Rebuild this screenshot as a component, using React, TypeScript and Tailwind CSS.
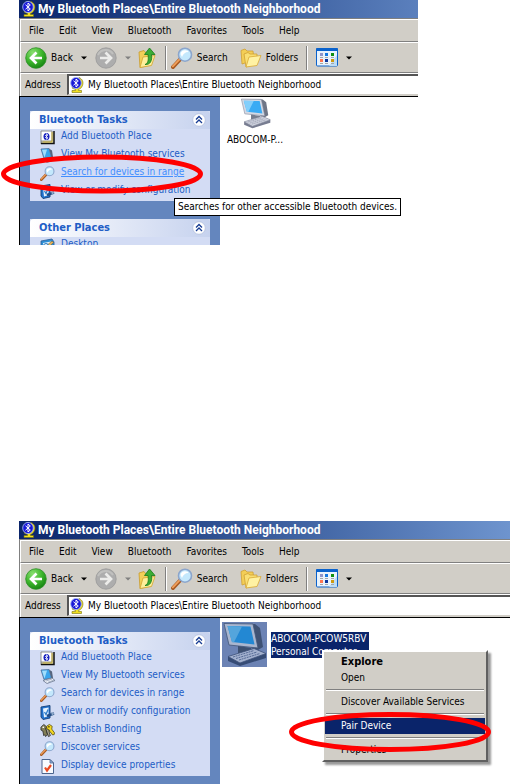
import React from 'react';
import clsx from 'clsx';

const menus = ['File', 'Edit', 'View', 'Bluetooth', 'Favorites', 'Tools', 'Help'];
const location = 'My Bluetooth Places\\Entire Bluetooth Neighborhood';

const BluetoothIcon: React.FC = () => (
  <svg width="14" height="16" viewBox="0 0 14 16" className="shrink-0">
    <path d="M9 0.500C12.500 2 13.700 5 12.500 8.500C11.500 11 10 12 8.500 12.500V13.500H11.500V15.500H2V13.500H5.500V12.500L2 11Z" fill="#f0e020" stroke="#77700a" strokeWidth="0.600" />
    <ellipse cx="6" cy="6" rx="5.300" ry="5.600" fill="#1818d8" stroke="#a3b2f2" strokeWidth="0.900" />
    <path d="M3.500 3.800L8.300 8L6 10V2L8.300 4L3.500 8.200" fill="none" stroke="#fff" strokeWidth="1" />
  </svg>
);

const BackIcon: React.FC = () => (
  <svg width="22" height="22" viewBox="0 0 22 22">
    <defs>
      <radialGradient id="backFill" cx="0.35" cy="0.25" r="0.8">
        <stop offset="0" stopColor="#8be070" />
        <stop offset="0.55" stopColor="#3db52c" />
        <stop offset="1" stopColor="#158311" />
      </radialGradient>
    </defs>
    <circle cx="11" cy="11" r="10.3" fill="url(#backFill)" stroke="#2c8f26" strokeWidth="0.8" />
    <path d="M17 11H6.500M11.500 5.500L6 11L11.500 16.500" fill="none" stroke="#fff" strokeWidth="2.700" />
  </svg>
);

const ForwardIcon: React.FC = () => (
  <svg width="22" height="22" viewBox="0 0 22 22">
    <circle cx="11" cy="11" r="10.2" fill="#adadad" stroke="#999" strokeWidth="0.8" />
    <path d="M3 8A8.500 8.500 0 0 1 18 7" fill="none" stroke="#c0c0be" strokeWidth="2" />
    <path d="M5 11H15.500M10.500 5.500L16 11L10.500 16.500" fill="none" stroke="#ececea" strokeWidth="2.700" />
  </svg>
);

const UpFolderIcon: React.FC = () => (
  <svg width="20" height="22" viewBox="0 0 20 22">
    <path d="M2 5L7 3.500L8.500 5.500H14V18L3 20.500Z" fill="#f2cf58" stroke="#c99a2c" strokeWidth="0.8" />
    <path d="M3 20.500L6 10L18 8.500L14.500 18.500Z" fill="#fdee9a" stroke="#d2a431" strokeWidth="0.8" />
    <path d="M8 17.500C11 16.500 11.800 13 11 7.500H7.500L12.500 1L18 7.500H14.500C15.500 14 13 18 8 17.500Z" fill="#3bad35" stroke="#187a19" strokeWidth="0.8" />
  </svg>
);

const Magnifier: React.FC<{ size: number }> = ({ size }) => (
  <svg width={size} height={size} viewBox="0 0 22 22" className="shrink-0">
    <path d="M2 20L9 12.500" stroke="#a85a22" strokeWidth="4" strokeLinecap="round" />
    <path d="M1.800 19.300L8.500 12.300" stroke="#f0a05c" strokeWidth="1.800" strokeLinecap="round" />
    <circle cx="14" cy="7.700" r="6.500" fill="#c4e8fc" stroke="#8ba5cc" strokeWidth="1.600" />
    <path d="M9.500 7A4.500 4.500 0 0 1 14 3.200C16 3.200 17 4 17.500 5C14 5 12 7 11 10Z" fill="#fff" />
  </svg>
);

const FoldersIcon: React.FC = () => (
  <svg width="22" height="20" viewBox="0 0 22 20">
    <path d="M1 2.500L5 1L7 3H13L14 12L2 16Z" fill="#f3ce56" stroke="#cf9f34" strokeWidth="0.8" />
    <path d="M4 6L8 4.500L10 6H17V15L6 19Z" fill="#f9df74" stroke="#cf9f34" strokeWidth="0.8" />
    <path d="M6 19L9 9L21 7.500L17 17.500Z" fill="#fff2a3" stroke="#d9aa35" strokeWidth="0.8" />
  </svg>
);

const ViewsIcon: React.FC = () => (
  <svg width="22" height="19" viewBox="0 0 22 19">
    <rect x="0.500" y="0.500" width="21" height="17.500" rx="1" fill="#e9f3fc" stroke="#0a62cc" />
    <rect width="22" height="3" rx="1" fill="#0a62cc" />
    <path d="M13 18L21 7V18Z" fill="#bcdcf6" />
    <rect x="4" y="5" width="3" height="3" fill="#9095c8" />
    <rect x="9" y="5" width="3" height="3" fill="#1478e0" />
    <rect x="15" y="5" width="3" height="3" fill="#109010" />
    <rect x="4" y="11" width="3" height="3" fill="#ff7650" />
    <rect x="9" y="11" width="3" height="3" fill="#0c359c" />
    <rect x="15" y="11" width="3" height="3" fill="#cf9a10" />
    <path d="M4 9.500H7M9 9.500H12M15 9.500H18M4 15.500H7M9 15.500H12M15 15.500H18" stroke="#a2a6a8" />
  </svg>
);

const Caret: React.FC<{ color: string }> = ({ color }) => (
  <svg width="6" height="4" viewBox="0 0 6 4">
    <path d="M0 0.500H6L3 3.500Z" fill={color} />
  </svg>
);

const ComputerIcon: React.FC<{ size: number; selected?: boolean }> = ({ size, selected }) => (
  <svg width={size} height={size} viewBox="0 0 45 45" className={clsx('shrink-0', selected && 'bg-[#6c83b4]')}>
    <path d="M4 2L33 2L38 6L41 25L36 28L31 27Z" fill={selected ? '#3f5274' : '#6f7686'} />
    <path d="M2 1.500L31 2L36 26L7 23Z" fill={selected ? '#a9b6cf' : '#d5d9e4'} stroke={selected ? '#435779' : '#7b8498'} strokeWidth="0.800" />
    <path d="M5.500 4L28.500 4.500L32.500 22.500L10 20Z" fill={selected ? '#2388d3' : '#3aabf4'} />
    <path d="M5.500 4L20 4.500L12 20.200H10Z" fill={selected ? '#54a5dc' : '#83cffb'} />
    <path d="M16 24L29 26L31 31L16 31Z" fill={selected ? '#3d5070' : '#777e8e'} />
    <path d="M6 35L33 27L44 32V36L18 44L6 39Z" fill={selected ? '#364c75' : '#777c90'} />
    <path d="M6 34.500L32 26.500L44 31.500L18 41Z" fill={selected ? '#a3b1ce' : '#d0d3df'} stroke={selected ? '#3c5178' : '#84899b'} strokeWidth="0.800" />
    <path d="M11 35L32 28.500M14 36.500L35 30M17 38L38 31.500" stroke={selected ? '#4c628f' : '#878d9f'} strokeWidth="0.900" strokeDasharray="2 0.700" />
  </svg>
);

const PlaceIcon: React.FC = () => (
  <svg width="15" height="15" viewBox="0 0 15 15">
    <path d="M1 1H12L14 3V13L12 14H1Z" fill="#d8d4b0" />
    <path d="M1 14V1H12V11H1" fill="#fff" stroke="#777" strokeWidth="0.8" />
    <path d="M1 13.500H14V1" fill="none" stroke="#111" strokeWidth="1.500" />
    <path d="M3 12H12V2" fill="none" stroke="#c8b13c" />
    <ellipse cx="6.500" cy="6.500" rx="3" ry="3.500" fill="#1821bf" />
    <path d="M5 5L8 8L6.500 9.300V3.700L8 5L5 8" fill="none" stroke="#fff" strokeWidth="0.700" />
  </svg>
);

const ServicesIcon: React.FC = () => (
  <svg width="15" height="15" viewBox="0 0 15 15">
    <path d="M1 1L9 0.500L11.500 9L4 10.500Z" fill="#3aa5ec" stroke="#53719a" strokeWidth="0.8" />
    <path d="M2 1.800L7 1.500L4.500 9.500Z" fill="#a1defc" />
    <path d="M9 0.500L12 2.500L13 9L11.500 9.500Z" fill="#56667f" />
    <path d="M3 11.500L12 9L15 11.500L7 14.500Z" fill="#edf1f8" stroke="#66748b" strokeWidth="0.8" />
    <path d="M6 12L12 10M8 13.300L14 11" stroke="#8f9cb3" strokeWidth="0.7" />
  </svg>
);

const ConfigIcon: React.FC = () => (
  <svg width="15" height="15" viewBox="0 0 15 15">
    <path d="M1 2L10 0.500V13L3 14.500L1 12Z" fill="#2273ce" stroke="#123e79" strokeWidth="0.9" />
    <path d="M3 3.500L8.500 2.500V11L4 12.500Z" fill="#e8f4ff" />
    <path d="M4.500 7L6 9.500L8 4.500" fill="none" stroke="#2e7dca" strokeWidth="1.300" />
    <path d="M7 11L14 8.500" stroke="#234c83" strokeWidth="2.400" />
    <path d="M11 7L14.500 8.500L12 11Z" fill="#8ca8c8" />
  </svg>
);

const KeysIcon: React.FC = () => (
  <svg width="16" height="15" viewBox="0 0 16 15">
    <g fill="#827f58" stroke="#222" strokeWidth="0.8">
      <path d="M1 4L4 1L7 3.500L6.500 6L8 12L6 14L5 12L4 13L3 8L1 7Z" />
      <path d="M6 5L9 4L10 10L11 13L9 14Z" fill="#aaa68b" />
    </g>
    <path d="M7 3L10 1L13 3L12.500 6L15.500 10L15 12H13L12 10L10.500 9L10 7L7.500 6Z" fill="#f3d722" stroke="#50480c" strokeWidth="0.8" />
    <circle cx="9.500" cy="3.500" r="0.900" fill="#443e10" />
    <circle cx="3.500" cy="4" r="0.900" fill="#fff" />
  </svg>
);

const PropertiesIcon: React.FC = () => (
  <svg width="15" height="15" viewBox="0 0 15 15">
    <path d="M2 0.500H10L13.500 4V14.500H2Z" fill="#f8fbff" stroke="#4c658e" />
    <path d="M10 0.500V4H13.500Z" fill="#93b5df" stroke="#4c658e" strokeWidth="0.8" />
    <path d="M5 8.500L7 11.500L11 6" fill="none" stroke="#ea4a22" strokeWidth="2.200" />
  </svg>
);

const DesktopIcon: React.FC = () => (
  <svg width="15" height="15" viewBox="0 0 15 15">
    <path d="M1 3L12 1L14 4V13L3 14.500L1 12Z" fill="#2d8fd6" stroke="#2b5c96" strokeWidth="0.8" />
    <path d="M3 5L11 3.500V11L4 12Z" fill="#e5f3fb" />
    <path d="M5 9L12 3L13.500 4.500L7 10.500Z" fill="#e6b35b" stroke="#7d6434" strokeWidth="0.600" />
    <circle cx="6" cy="8" r="2.500" fill="none" stroke="#2c79c0" />
  </svg>
);

interface Task {
  label: string;
  icon: React.ReactNode;
  active?: boolean;
}

const addPlace: Task = { label: 'Add Bluetooth Place', icon: <PlaceIcon /> };
const viewServices: Task = { label: 'View My Bluetooth services', icon: <ServicesIcon /> };
const searchDevices: Task = { label: 'Search for devices in range', icon: <Magnifier size={15} /> };
const configure: Task = { label: 'View or modify configuration', icon: <ConfigIcon /> };

const baseTasks: Task[] = [addPlace, viewServices, { ...searchDevices, active: true }, configure];

const deviceTasks: Task[] = [
  addPlace,
  viewServices,
  searchDevices,
  configure,
  { label: 'Establish Bonding', icon: <KeysIcon /> },
  { label: 'Discover services', icon: <Magnifier size={15} /> },
  { label: 'Display device properties', icon: <PropertiesIcon /> },
];

const TaskBox: React.FC<{ title: string; tasks: Task[] }> = ({ title, tasks }) => (
  <section className="bg-[#d3dcf4]">
    <header className="flex h-[18px] items-center justify-between rounded-t-sm bg-linear-to-r from-white to-[#c6d2ee] pr-1 pl-[9px]">
      <h2 className="text-[11px] leading-4 font-bold text-[#215dc6]">{title}</h2>
      <button type="button" aria-label={'Collapse ' + title}>
        <svg width="14" height="14" viewBox="0 0 14 14">
          <circle cx="7" cy="7" r="6.300" fill="#fff" stroke="#b3bfdd" strokeWidth="0.8" />
          <path d="M4 6.500L7 3.500L10 6.500M4 10L7 7L10 10" fill="none" stroke="#173c93" strokeWidth="1.300" />
        </svg>
      </button>
    </header>
    <ul>
      {tasks.map((task) => (
        <li key={task.label} className="h-[18px] pl-[10px]">
          <a
            href="#"
            className={clsx('flex items-start gap-[6px] leading-[14px]', task.active ? 'text-[#428eff] underline' : 'text-[#215dc6]')}
          >
            <span className="flex w-[15px] shrink-0 justify-center pt-px">{task.icon}</span>
            <span className="whitespace-nowrap">{task.label}</span>
          </a>
        </li>
      ))}
    </ul>
  </section>
);

interface ExplorerProps {
  id: string;
  titleClass: string;
  className?: string;
  bodyClass?: string;
  sidebar: React.ReactNode;
  children: React.ReactNode;
}

const ExplorerWindow: React.FC<ExplorerProps> = ({ id, titleClass, className, bodyClass, sidebar, children }) => (
  <div className={clsx('flex flex-col', className)}>
    <div className={clsx('flex h-[18px] items-center gap-[2px] overflow-hidden bg-linear-to-r from-[#0a246a] pl-[3px]', titleClass)}>
      <BluetoothIcon />
      <h1 className="font-[Roboto,sans-serif] text-[12px] font-bold whitespace-nowrap text-white">{location}</h1>
    </div>
    <div className="border-t border-l border-[#808080] bg-[#d1cec7]">
      <nav className="flex h-[23px] items-center gap-[15px] border-t border-b border-l border-t-white border-b-[#808080] border-l-white pl-2">
        {menus.map((menu) => (
          <button type="button" key={menu}>{menu}</button>
        ))}
      </nav>
      <div className="flex h-[31px] items-center border-t border-b border-l border-t-white border-b-[#808080] border-l-white pl-1">
        <button type="button" className="flex items-center gap-1"><BackIcon />Back</button>
        <button type="button" aria-label="Back history" className="ml-2"><Caret color="#000" /></button>
        <button type="button" aria-label="Forward" className="ml-2"><ForwardIcon /></button>
        <button type="button" aria-label="Forward history" className="ml-2"><Caret color="#808080" /></button>
        <button type="button" aria-label="Up" className="ml-[6px]"><UpFolderIcon /></button>
        <span className="ml-2 h-6 w-[2px] border-r border-l border-r-white border-l-[#808080]" />
        <button type="button" className="ml-1 flex items-center gap-1"><Magnifier size={22} />Search</button>
        <button type="button" className="ml-3 flex items-center gap-1"><FoldersIcon />Folders</button>
        <span className="ml-2 h-6 w-[2px] border-r border-l border-r-white border-l-[#808080]" />
        <button type="button" aria-label="Views" className="ml-2"><ViewsIcon /></button>
        <button type="button" aria-label="View options" className="ml-2"><Caret color="#000" /></button>
      </div>
      <div className="flex h-[23px] items-stretch border-t border-l border-white pl-1">
        <label htmlFor={id} className="w-[42px] self-center">Address</label>
        <div className="mb-px flex min-w-0 flex-1 items-center gap-1 border-t-2 border-b border-l-2 border-t-[#555] border-b-[#d1cec7] border-l-[#555] bg-white pl-px">
          <BluetoothIcon />
          <input id={id} className="min-w-0 flex-1 bg-transparent outline-none" defaultValue={location} />
        </div>
      </div>
    </div>
    <div className={clsx('flex border-t border-l border-black', bodyClass)}>
      <aside className="flex w-[200px] shrink-0 flex-col gap-[18px] bg-[#6486be] px-[10px] pt-[14px]">{sidebar}</aside>
      <main className="min-w-0 flex-1 bg-white">{children}</main>
    </div>
  </div>
);

const MenuItem: React.FC<{ label: string; className?: string }> = ({ label, className }) => (
  <button type="button" role="menuitem" className={clsx('block h-4 w-full pl-4 text-left leading-4', className)}>{label}</button>
);

const MenuDivider: React.FC = () => (
  <div className="flex h-2 items-center px-px">
    <div className="h-[2px] w-full border-t border-b border-t-[#808080] border-b-white" />
  </div>
);

const App: React.FC = () => (
  <div className="flex min-h-screen flex-col gap-[276px] overflow-hidden bg-white font-['DejaVu_Sans_Condensed','DejaVu_Sans',sans-serif] text-[10px] leading-[14px] text-black">
    <div className="relative pr-[92px] pl-[19px]">
      <ExplorerWindow
        id="address-search"
        titleClass="to-[#5b80bd]"
        bodyClass="h-[149px] overflow-hidden"
        sidebar={
          <>
            <TaskBox title="Bluetooth Tasks" tasks={baseTasks} />
            <TaskBox title="Other Places" tasks={[{ label: 'Desktop', icon: <DesktopIcon /> }]} />
          </>
        }
      >
        <figure className="flex w-[70px] flex-col items-center gap-1 pt-px">
          <ComputerIcon size={31} />
          <figcaption className="whitespace-nowrap">ABOCOM-P...</figcaption>
        </figure>
      </ExplorerWindow>
      <div role="tooltip" className="absolute top-[198px] left-[174px] border border-black bg-white px-[3px] py-px whitespace-nowrap">
        Searches for other accessible Bluetooth devices.
      </div>
      <svg width="204" height="40" viewBox="0 0 204 40" className="pointer-events-none absolute top-[154px] left-0">
        <ellipse cx="102" cy="20" rx="98.500" ry="17" fill="none" stroke="#f00" strokeWidth="5" />
      </svg>
    </div>

    <div className="relative flex flex-1 flex-col pl-[19px]">
      <ExplorerWindow
        id="address-pair"
        className="flex-1"
        titleClass="to-[#6e94ce]"
        bodyClass="flex-1"
        sidebar={
          <div className="pb-2">
            <TaskBox title="Bluetooth Tasks" tasks={deviceTasks} />
          </div>
        }
      >
        <div className="flex items-start gap-1 pt-1 pl-[2px]">
          <ComputerIcon size={45} selected />
          <p className="mt-[10px] bg-[#0a246a] pr-[3px] leading-[13px] whitespace-nowrap text-white">
            ABOCOM-PCOW5RBV
            <br />
            Personal Computer
          </p>
        </div>
      </ExplorerWindow>
      <div
        role="menu"
        className="absolute top-[129px] left-[322px] w-[166px] border-2 border-t-white border-r-[#606060] border-b-[#606060] border-l-white bg-[#d1cec7] px-px py-[2px] shadow-[3px_3px_2px_#999]"
      >
        <MenuItem label="Explore" className="text-[11px] font-bold" />
        <MenuItem label="Open" />
        <MenuDivider />
        <MenuItem label="Discover Available Services" />
        <MenuDivider />
        <MenuItem label="Pair Device" className="bg-[#0a246a] text-white" />
        <MenuDivider />
        <MenuItem label="Properties" />
      </div>
      <svg width="204" height="42" viewBox="0 0 204 42" className="pointer-events-none absolute top-[190px] left-[288px]">
        <ellipse cx="102" cy="21" rx="98.500" ry="17.500" fill="none" stroke="#f00" strokeWidth="5" />
      </svg>
    </div>
  </div>
);

export default App;
